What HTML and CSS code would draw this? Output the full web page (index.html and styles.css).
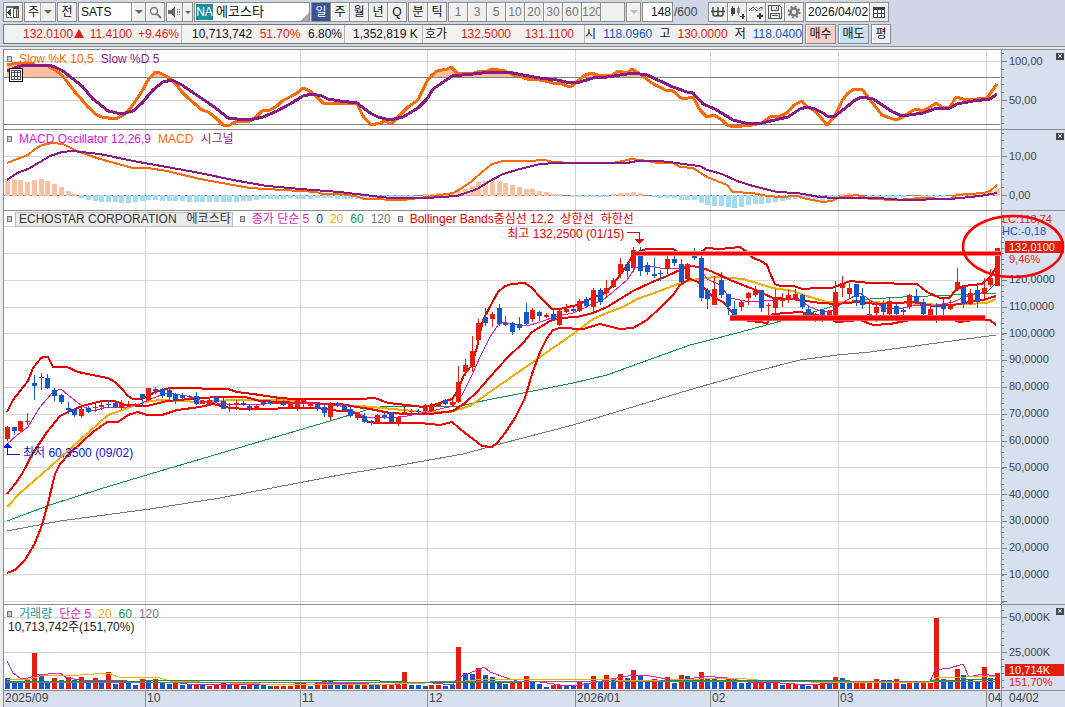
FILE: index.html
```html
<!DOCTYPE html>
<html lang="ko">
  <head>
    <meta charset="UTF-8" />
    <meta name="viewport" content="width=device-width, initial-scale=1.0" />
    <title>SATS 에코스타</title>
    <link rel="stylesheet" href="styles.css">
  </head>
  <body>
    <header class="header">
      <div class="toolbar">
        <button class="btn" aria-label="패널">
          <svg width="14" height="14" viewBox="0 0 14 14" shape-rendering="crispEdges">
            <path d="M1 2h12v11h-12z" fill="#fff" />
            <path d="M0 1h13v2h-13zM0 3h1v10h-1zM0 12h6v1h-6z" fill="#666" />
            <path d="M7 1h6v12h-6z" fill="#555" />
            <path d="M8 4h2v8h-2z" fill="#fff" />
            <path d="M11 4h1v8h-1z" fill="#bbb" />
            <path d="M5 4v7l-4-3.500z" fill="#444" />
          </svg>
        </button>
        <span class="combo">
          <select class="combo-select" aria-label="종목 구분"><option>주</option></select>
        </span>
        <button class="btn">전</button>
        <span class="field">
          <input class="code-input" type="text" value="SATS" aria-label="종목코드" />
          <button class="btn arrow" aria-label="목록"></button>
          <button class="btn" aria-label="검색">
            <svg width="13" height="13" viewBox="0 0 13 13" fill="none" stroke="#777">
              <circle cx="5" cy="5" r="3.500" stroke-width="1.500" />
              <path d="M8 8l4 4" stroke-width="2" />
            </svg>
          </button>
        </span>
        <span class="group">
          <button class="btn btn-narrow" aria-label="소리">
            <svg width="13" height="12" viewBox="0 0 13 12" shape-rendering="crispEdges">
              <path d="M0 4h3l4-4v12l-4-4h-3z" fill="#666" />
              <path d="M9 3h1v1h-1zM11 3h1v1h-1zM9 5h1v2h-1zM11 5h1v2h-1zM9 8h1v1h-1zM11 8h1v1h-1z" fill="#666" />
            </svg>
          </button>
          <button class="btn arrow arrow-small" aria-label="소리 설정"></button>
        </span>
        <div class="name-box"><span class="market">NA</span>에코스타</div>
        <span class="group">
          <button class="btn active">일</button>
          <button class="btn">주</button>
          <button class="btn">월</button>
          <button class="btn">년</button>
          <button class="btn">Q</button>
        </span>
        <span class="group">
          <button class="btn">분</button>
          <button class="btn">틱</button>
        </span>
        <span class="group">
          <button class="btn muted">1</button>
          <button class="btn muted">3</button>
          <button class="btn muted">5</button>
          <button class="btn muted">10</button>
          <button class="btn muted">20</button>
          <button class="btn muted">30</button>
          <button class="btn muted">60</button>
          <button class="btn muted">120</button>
          <input class="minute-input" type="text" aria-label="분 입력" disabled />
          <button class="btn arrow arrow-off" aria-label="분 목록" disabled></button>
        </span>
        <span class="count">
          <input class="count-input" type="text" value="148" aria-label="표시 개수" />/600
        </span>
        <span class="group">
          <button class="btn" aria-label="원화">
            <svg width="14" height="12" viewBox="0 0 14 12" fill="none" stroke="#444" stroke-width="1.500">
              <path d="M2 1v7q0 2 2 2h1q2 0 2-2v-7M7 8q0 2 2 2h1q2 0 2-2v-7M0 5.500h14" />
            </svg>
          </button>
          <button class="btn" aria-label="캔들 추가">
            <svg width="15" height="15" viewBox="0 0 15 15" shape-rendering="crispEdges">
              <path d="M1 3h4v6h-4zM2 1h1v10h-1zM12 9h2v2h1v1h-1v2h-2v-2h-2v-1h2z" fill="#444" />
              <path d="M7 3h3v5h-3zM8 1h1v9h-1z" fill="#888" />
            </svg>
          </button>
          <button class="btn" aria-label="지표 추가">
            <svg width="15" height="15" viewBox="0 0 15 15" fill="none">
              <path d="M0 6l4-4 4 4 4-4 2 2" stroke="#555" />
              <path d="M0 3l3 3 4-4 4 4 3-4" stroke="#999" />
              <path d="M11 8v6M8 11h6" stroke="#444" stroke-width="2" />
            </svg>
          </button>
          <button class="btn" aria-label="저장">
            <svg width="14" height="14" viewBox="0 0 14 14" fill="#555" shape-rendering="crispEdges">
              <path d="M0 0h12v1h-12zM0 0h1v14h-1zM0 13h14v1h-14zM13 2h1v12h-1zM12 1h1v1h-1zM3 1h1v4h-1zM3 5h8v1h-8zM10 1h1v4h-1zM8 2h1v2h-1zM2 8h1v5h-1zM2 8h10v1h-10zM11 8h1v5h-1zM4 10h6v1h-6z" />
            </svg>
          </button>
          <button class="btn" aria-label="설정">
            <svg width="14" height="14" viewBox="0 0 14 14" fill="none" stroke="#777">
              <circle cx="7" cy="7" r="3.500" stroke-width="2.500" />
              <circle cx="7" cy="7" r="5.500" stroke-width="2" stroke-dasharray="2 2.320" />
            </svg>
          </button>
        </span>
        <span class="field">
          <input class="date-input" type="text" value="2026/04/02" aria-label="날짜" />
          <button class="btn" aria-label="달력">
            <svg width="12" height="11" viewBox="0 0 12 11" shape-rendering="crispEdges">
              <path d="M0 0h12v11h-12z" fill="#444" />
              <path d="M1 3h3v3h-3zM5 3h3v3h-3zM9 3h2v3h-2zM1 7h3v3h-3zM5 7h3v3h-3zM9 7h2v3h-2z" fill="#fff" />
            </svg>
          </button>
        </span>
      </div>

      <div class="quote-row">
        <div class="quotes">
          <div class="quote quote-price">
            <span class="up">132.0100<i class="up-mark"></i></span>
            <span class="up">11.4100</span>
            <span class="up">+9.46%</span>
          </div>
          <div class="quote quote-volume">
            <span>10,713,742</span>
            <span class="up">51.70%</span>
            <span>6.80%</span>
          </div>
          <div class="quote quote-amount"><span>1,352,819 K</span></div>
          <div class="quote quote-bid">
            <span>호가</span>
            <span class="up">132.5000</span>
            <span class="up">131.1100</span>
          </div>
          <div class="quote quote-range">
            <span>시</span>
            <span class="down">118.0960</span>
            <span>고</span>
            <span class="up">130.0000</span>
            <span>저</span>
            <span class="down">118.0400</span>
          </div>
        </div>
        <button class="btn order buy">매수</button>
        <button class="btn order sell">매도</button>
        <button class="btn">평</button>
      </div>
    </header>

    <main class="chart">
      <section class="panel panel-stoch">
        <div class="plot">
          <svg class="canvas" id="stoch" viewBox="4 50 997 79" preserveAspectRatio="none"></svg>
          <div class="legend">
            <i class="handle"></i>
            <span class="orange">Slow %K 10,5</span>
            <span class="purple">Slow %D 5</span>
          </div>
          <button class="grid-btn" aria-label="데이터 표">
            <svg width="10" height="10" viewBox="0 0 10 10" shape-rendering="crispEdges">
              <path d="M0 0h10v10h-10z" fill="#555" />
              <path d="M1 1h2v1h-2zM4 1h2v1h-2zM7 1h2v1h-2zM1 3h2v3h-2zM4 3h2v3h-2zM7 3h2v3h-2zM1 7h2v2h-2zM4 7h2v2h-2zM7 7h2v2h-2z" fill="#fff" />
            </svg>
          </button>
        </div>
        <div class="axis">
          <svg class="canvas" id="stochAxis" viewBox="1002 50 63 79" preserveAspectRatio="none"></svg>
          <button class="close" aria-label="닫기">×</button>
          <div class="scale scale-stoch"><span>100,00</span><span>50,00</span></div>
        </div>
      </section>

      <section class="panel panel-macd">
        <div class="plot">
          <svg class="canvas" id="macd" viewBox="4 130 997 80" preserveAspectRatio="none"></svg>
          <div class="legend">
            <i class="handle"></i>
            <span class="violet">MACD Oscillator 12,26,9</span>
            <span class="orange">MACD</span>
            <span class="purple">시그널</span>
          </div>
        </div>
        <div class="axis">
          <svg class="canvas" id="macdAxis" viewBox="1002 130 63 80" preserveAspectRatio="none"></svg>
          <button class="close" aria-label="닫기">×</button>
          <div class="scale scale-macd"><span>10,00</span><span>0,00</span></div>
        </div>
      </section>

      <section class="panel panel-price">
        <div class="plot">
          <svg class="canvas" id="price" viewBox="4 211 997 393" preserveAspectRatio="none"></svg>
          <div class="legend legend-price">
            <i class="handle"></i>
            <span class="company">ECHOSTAR CORPORATION &nbsp;&nbsp;에코스타</span>
            <i class="handle"></i>
            <span class="magenta">종가 단순 5</span>
            <span class="navy">0</span>
            <span class="yellow">20</span>
            <span class="green">60</span>
            <span class="gray">120</span>
            <i class="handle"></i>
            <span class="red">Bollinger Bands중심선 12,2</span>
            <span class="red">상한선</span>
            <span class="red">하한선</span>
          </div>
          <span class="note note-high">최고 132,2500 (01/15)</span>
          <span class="note note-low">최저 60,3500 (09/02)</span>
        </div>
        <div class="axis">
          <svg class="canvas" id="priceAxis" viewBox="1002 211 63 393" preserveAspectRatio="none"></svg>
          <div class="axis-info">
            <span class="up">LC:118,74</span>
            <span class="down">HC:-0,18</span>
            <span class="tag">132,0100</span>
            <span class="up rate">9,46%</span>
          </div>
          <div class="scale scale-price">
            <span>120,0000</span><span>110,0000</span><span>100,0000</span><span>90,0000</span>
            <span>80,0000</span><span>70,0000</span><span>60,0000</span><span>50,0000</span>
            <span>40,0000</span><span>30,0000</span><span>20,0000</span><span>10,0000</span>
          </div>
        </div>
        <svg class="canvas marks" viewBox="4 211 1061 393" preserveAspectRatio="none">
          <path d="M635 253.500H1001" stroke="#ff8080" stroke-width="5" />
          <path d="M635 253.500H1001" stroke="#f00" stroke-width="3" />
          <path d="M730 318H985" stroke="#ff5050" stroke-width="6" />
          <path d="M730 318H985" stroke="#f00" stroke-width="4" />
          <ellipse cx="1013" cy="246.500" rx="50" ry="30.500" fill="none" stroke="#f00" stroke-width="2.500" />
        </svg>
      </section>

      <section class="panel panel-volume">
        <div class="plot">
          <svg class="canvas" id="volume" viewBox="4 605 997 85" preserveAspectRatio="none"></svg>
          <div class="legend">
            <i class="handle"></i>
            <span class="teal">거래량</span>
            <span class="magenta">단순 5</span>
            <span class="yellow">20</span>
            <span class="green">60</span>
            <span class="gray">120</span>
          </div>
          <div class="volume-now">10,713,742주(151,70%)</div>
        </div>
        <div class="axis">
          <svg class="canvas" id="volumeAxis" viewBox="1002 605 63 85" preserveAspectRatio="none"></svg>
          <button class="close" aria-label="닫기">×</button>
          <div class="scale scale-volume"><span>50,000K</span><span>25,000K</span></div>
          <div class="axis-info axis-info-volume">
            <span class="tag">10,714K</span>
            <span class="up rate">151,70%</span>
          </div>
        </div>
      </section>

      <footer class="dates">
        <div class="months">
          <span>2025/09</span><span>10</span><span>11</span><span>12</span>
          <span>2026/01</span><span>02</span><span>03</span><span>04</span>
        </div>
        <div class="today">04/02</div>
      </footer>
    </main>

    <script src="chart.js"></script>
  </body>
</html>
```
FILE: styles.css
```css
* {
  box-sizing: border-box;
}

body {
  margin: 0;
  min-height: 100vh;
  display: flex;
  flex-direction: column;
  background-color: #ebebeb;
  color: #111;
  font-family: "Liberation Sans", "Noto Sans CJK KR", sans-serif;
  font-size: 12px;
  overflow-x: hidden;
}

button,
input,
select {
  font-family: inherit;
  font-size: inherit;
  color: inherit;
  margin: 0;
  padding: 0;
  border-radius: 0;
}

/* Header */
.header {
  height: 46px;
  flex: none;
  padding: 2px 3px 0;
  background-color: #cfd6e6;
}

.toolbar {
  display: flex;
  gap: 1px;
  height: 20px;
  white-space: nowrap;
}

.group,
.field,
.count {
  display: flex;
  flex: none;
}

.btn {
  width: 20px;
  height: 20px;
  flex: none;
  display: flex;
  align-items: center;
  justify-content: safe center;
  border: 1px solid #8c8c8c;
  background-color: #f0f0f0;
  box-shadow: inset 1px 1px #fff;
  overflow: hidden;
  line-height: 16px;
}

.group .btn + .btn {
  margin-left: -1px;
}

.btn-narrow {
  width: 17px;
}

.active {
  background-color: #3a5391;
  box-shadow: none;
  color: #fff;
}

.muted {
  color: #777;
}

.combo {
  position: relative;
  width: 32px;
  flex: none;
}

.combo-select {
  appearance: none;
  width: 100%;
  height: 20px;
  padding-left: 3px;
  border: 1px solid #8c8c8c;
  background-color: #fff;
}

.combo::after {
  content: "";
  position: absolute;
  right: 1px;
  top: 1px;
  width: 14px;
  height: 18px;
  border-left: 1px solid #aaa;
  background-color: #f0f0f0;
  pointer-events: none;
}

.combo::before,
.arrow::after {
  content: "";
  border: 4px solid transparent;
  border-top-color: #666;
  border-bottom: 0;
}

.combo::before {
  position: absolute;
  right: 4px;
  top: 8px;
  z-index: 1;
  pointer-events: none;
}

.field input,
.count input,
.minute-input {
  height: 20px;
  border: 1px solid #8c8c8c;
  background-color: #fff;
}

.field .btn {
  margin-left: -1px;
}

.code-input {
  width: 54px;
  padding-left: 2px;
}

.arrow {
  width: 15px;
}

.arrow-small {
  width: 11px;
}

.arrow-small::after {
  border-width: 3px 3px 0;
}

.arrow-off::after {
  border-top-color: #bbb;
}

.name-box {
  width: 116px;
  height: 20px;
  flex: none;
  border: 1px solid #8c8c8c;
  background: linear-gradient(135deg, transparent 50%, #aaa 50%) right bottom / 8px 8px no-repeat #fff;
  font-size: 13px;
  line-height: 17px;
}

.market {
  display: inline-block;
  margin: 1px 3px 0 1px;
  width: 17px;
  height: 16px;
  line-height: 16px;
  font-size: 12px;
  text-align: center;
  vertical-align: top;
  background-color: #1d8f9e;
  color: #fff;
}

.toolbar .minute-input {
  width: 25px;
  margin-left: -1px;
  background-color: #f0f0f0;
}

.minute-input + .arrow {
  margin-left: 1px;
}

.count {
  width: 65px;
  align-items: center;
  color: #444;
}

.count-input {
  width: 31px;
  margin-right: 1px;
  padding-right: 1px;
  text-align: right;
  color: #111;
}

.date-input {
  width: 65px;
  padding-left: 2px;
}

/* Quotes */
.quote-row {
  display: flex;
  gap: 2px;
  margin-top: 2px;
}

.quotes {
  display: flex;
  width: 800px;
  height: 20px;
  border: 1px solid #777;
  background-color: #f2f2f2;
  line-height: 18px;
  white-space: nowrap;
  overflow: hidden;
}

.quote {
  display: flex;
  flex: none;
  justify-content: space-between;
  padding: 0 2px;
  border-left: 1px solid #b4b4b4;
}

.quote-price {
  width: 177px;
  padding-left: 19px;
  border-left: 0;
}

.quote-volume {
  width: 163px;
  padding-left: 10px;
}

.quote-amount {
  width: 78px;
  padding-left: 8px;
}

.quote-bid {
  width: 162px;
  padding-right: 10px;
}

.quote-range {
  width: 220px;
  padding-left: 0;
}

.up {
  color: #e81c0c;
}

.down {
  color: #1454c8;
}

.up-mark {
  display: inline-block;
  margin-left: 1px;
  border: 5px solid transparent;
  border-top: 0;
  border-bottom: 9px solid #e81c0c;
}

.order {
  width: 31px;
}

.buy {
  background-color: #f4d0ca;
}

.sell {
  background-color: #c8e0f4;
}

/* Chart */
.chart {
  flex: 1;
  display: flex;
  flex-direction: column;
  padding: 2px 0 0 3px;
  border-top: 1px solid #8c8c8c;
}

.panel {
  position: relative;
  display: flex;
  flex: none;
  border-top: 1px solid #8c8c8c;
  border-left: 1px solid #8c8c8c;
}

.panel-stoch {
  height: 80px;
}

.panel-macd {
  height: 81px;
}

.panel-price {
  flex: 1;
  min-height: 394px;
}

.panel-volume {
  height: 86px;
}

.plot {
  position: relative;
  flex: 1;
  min-width: 0;
  background-color: #fff;
  overflow: hidden;
}

.axis {
  position: relative;
  width: 64px;
  flex: none;
  display: flex;
  flex-direction: column;
  border-left: 1px solid #8c8c8c;
  background-color: #d6e0ee;
  color: #444;
  font-size: 11px;
}

.canvas {
  position: absolute;
  left: 0;
  top: 0;
  width: 100%;
  height: 100%;
  shape-rendering: crispEdges;
}

.marks {
  z-index: 2;
  pointer-events: none;
  shape-rendering: auto;
}

.legend {
  position: absolute;
  left: 3px;
  top: 1px;
  display: flex;
  align-items: center;
  gap: 7px;
  line-height: 16px;
  white-space: nowrap;
}

.legend-price {
  top: 0;
}

.handle {
  width: 5px;
  height: 6px;
  border: 1px solid #777;
  background-color: #ccc;
}

.company {
  padding: 0 1px 0 3px;
  margin-left: -4px;
  border: 1px solid #bbb;
  background-color: #ebebeb;
  line-height: 13px;
  color: #333;
}

.orange { color: #ff6a00; }
.purple { color: #8c1a84; }
.violet { color: #d414e0; }
.magenta { color: #d81eb4; }
.navy { color: #0a28a8; }
.yellow { color: #f0ac00; }
.green { color: #0f963c; }
.gray { color: #777; }
.red { color: #e80000; }
.teal { color: #2e9296; }

.grid-btn {
  position: absolute;
  left: 5px;
  top: 18px;
  width: 14px;
  height: 14px;
  display: flex;
  align-items: center;
  justify-content: center;
  border: 1px solid #000;
  background-color: #eee;
}

.note {
  position: absolute;
  line-height: 16px;
  white-space: nowrap;
}

.note-high {
  right: 37.8%;
  top: 15px;
  color: #e80000;
}

.note-low {
  left: 19px;
  top: 59.500%;
  color: #0a14d8;
}

.volume-now {
  position: absolute;
  left: 4px;
  top: 14px;
  line-height: 16px;
  color: #222;
}

.close {
  position: absolute;
  right: 1px;
  top: 3px;
  width: 8px;
  height: 7px;
  border: 0;
  background-color: #444;
  color: #fff;
  font-size: 9px;
  line-height: 7px;
}

/* Axis labels */
.scale {
  position: relative;
  display: flex;
  flex-direction: column;
  justify-content: space-between;
  padding-left: 7px;
  line-height: 14px;
}

.scale-stoch {
  height: 53px;
  margin-top: 4px;
}

.scale-macd {
  height: 53px;
  margin-top: 19px;
}

.scale-volume {
  height: 49px;
  margin-top: 5px;
}

.scale-price {
  flex: 1;
  margin-bottom: 23px;
}

.axis-info {
  position: relative;
  height: 61px;
  display: flex;
  flex-direction: column;
  line-height: 12px;
  padding-top: 2px;
}

.axis-info-volume {
  height: auto;
  padding-top: 5px;
}

.tag {
  margin: 4px 1px 0 3px;
  padding-left: 4px;
  background-color: #e81c0c;
  color: #fff;
}

.axis-info-volume .tag {
  margin-top: 0;
}

.rate {
  padding-left: 7px;
}

/* Dates */
.dates {
  display: flex;
  height: 17px;
  flex: none;
  border-top: 1px solid #8c8c8c;
  background-color: #d6e0ee;
  color: #444;
  line-height: 15px;
}

.months {
  flex: 1;
  display: grid;
  grid-template-columns: 142fr 155fr 127fr 148fr 135fr 128fr 148fr 15fr;
}

.months span {
  min-width: 0;
  padding-left: 1px;
  border-left: 1px solid #8c8c8c;
}

.today {
  width: 64px;
  padding-left: 7px;
  border-left: 1px solid #8c8c8c;
}
```
FILE: chart.js
```js
const NS = "http://www.w3.org/2000/svg";
const RED = "#e81c0c";
const BLUE = "#1459cc";
const GRID = "#d6d6d6";
const DARK = "#808080";
const STEP = 6.735;

const months = [145, 300, 427, 575, 710, 838, 986];

// body top, body bottom, wick top, wick bottom
const candles = `r427,439,426,441 b427,431,427,435 r421,431,421,433 r421,422,413,425 b383,386,375,400
b377,378,373,390 b378,388,374,389 b390,396,388,401 b395,402,394,404 b408,410,402,414
b409,415,408,417 r409,416,405,418 b408,412,406,413 r407,408,404,412 r405,407,401,410
b404,405,400,408 b403,407,402,408 r404,408,400,410 r404,405,401,407 r404,405,403,407
b394,398,394,405 r388,400,388,401 b389,391,387,394 b389,396,388,398 b390,397,388,400
b394,401,393,404 b395,398,393,399 b396,397,395,399 b396,404,392,405 r401,404,400,404
r400,405,397,405 b397,402,397,402 b401,409,397,409 r404,405,403,412 r403,405,400,410
b403,405,401,406 b406,409,404,411 r406,409,405,409 b402,404,401,406 b402,403,400,405
r401,404,397,404 b402,405,400,406 r404,407,403,408 r400,407,400,411 r400,402,398,407
r404,406,403,407 b404,409,403,411 b407,413,405,417 r404,417,402,420 b403,405,402,407
b405,410,405,410 b409,416,407,417 r414,418,413,420 b416,422,413,423 b421,423,420,425
r415,423,414,424 b415,417,413,419 b412,422,412,424 r417,422,416,426 r412,413,406,415
r411,412,409,414 b411,412,409,414 r405,411,404,413 r405,411,403,412 r403,406,402,407
b400,404,399,405 r402,405,400,407 r382,402,366,403 r365,372,359,376 r351,367,336,372
r323,340,319,344 b317,323,308,326 r314,319,312,327 b308,324,304,326 b323,325,316,326
b323,332,322,335 b324,328,317,330 b312,324,303,325 r310,319,308,322 b312,316,311,321
r315,317,313,318 b314,320,308,321 r311,325,310,326 r309,312,304,313 b309,311,305,312
r301,311,299,312 b299,306,297,308 r290,307,288,312 b290,302,288,305 r288,293,280,298
r280,287,278,288 r264,274,258,278 b264,271,262,277 r250,268,247,272 b252,271,247,276
b265,272,262,275 b274,276,258,278 b273,274,270,281 r259,269,256,274 b259,263,256,266
b264,282,259,285 r264,279,263,281 b255,258,248,260 b258,298,255,301 b290,299,288,309
r289,305,276,305 b280,295,272,298 b294,306,294,315 b309,316,301,317 r302,307,300,311
r293,298,292,305 r291,295,286,297 b290,308,290,312 r305,306,303,315 r298,308,289,314
r299,301,293,307 r295,300,290,303 r294,300,289,301 b295,307,294,309 b309,316,306,317
b315,316,313,322 b310,316,309,322 r311,315,310,317 r292,315,281,316 r283,288,276,297
r288,294,283,298 b284,297,284,306 b296,305,288,309 b314,316,300,317 r307,313,302,322
b304,312,300,316 r301,314,297,315 b306,314,304,316 b310,312,308,317 r295,307,294,309
b296,302,289,303 b302,314,299,315 r309,316,306,317 b306,307,303,323 b304,309,299,317
r304,309,300,310 r282,289,268,291 b287,304,286,308 r293,304,289,305 b290,302,285,308
r288,294,278,299 r278,285,269,287 r248,286,248,286`.split(/\s+/);

// bar heights with the day's direction
const volumes = `b11 b8 b6 r10 r36 b14 b6 r11 b9 r12 b9 r12 b6 r11 b6 r17 b5 r6 b6 b4 r10 b8 r10 b6 b5
r6 b4 b4 r4 b4 r3 r4 r6 b4 r5 b3 r5 b4 b4 b3 r3 r3 r3 r6 r6 b3 r6 r8 b8 b4 b4
r4 b4 r6 b4 b4 r4 r4 r4 r17 b4 b4 b3 r4 r4 b3 b4 r42 b16 b15 r21 b14 b12 b6 b5 r7 r7 r13 b7 b5
b2 r4 r4 b3 b3 r7 b6 r13 b7 r14 b11 r15 b11 r19 b14 b8 r10 b8 r12 b6 r14 b13 b8 r17 b10
b10 b9 r10 b7 b6 b6 r6 r9 b6 r6 b4 r5 r5 b4 b3 r5 r6 b5 r12 b11 b7 r7 r6 r6 r10 b9 b9 r10
b5 r6 b6 r6 r6 r71 b10 b7 r20 b14 b10 b7 r22 b11 r16`.split(/\s+/);

const oscillator = [
  16, 15, 15, 13, 15, 16, 14, 11, 8, 4, 1, -2, -4, -5, -6, -6, -6, -7, -7, -6, -5, -4, -4, -5, -5,
  -5, -5, -6, -6, -6, -6, -6, -6, -6, -6, -5, -5, -4, -3, -3, -3, -3, -2, -3, -3, -3, -2, -2, -2, -3,
  -3, -3, -3, -4, -4, -2, -2, -2, -2, -1, -1, 0, 1, 1, 2, 2, 2, 4, 6, 9, 13, 14, 14, 14, 12,
  10, 8, 6, 6, 4, 3, 1, 1, 0, -1, -1, -1, -1, -1, -1, 1, 2, 2, 3, 2, 0, -1, -2, -2, -2,
  -4, -4, -4, -7, -9, -10, -10, -11, -12, -11, -9, -8, -8, -7, -6, -5, -4, -3, -3, -4, -5, -5, -4, -2, 1,
  2, 1, 0, -1, -2, -3, -3, -3, -3, 0, 0, -1, -1, -1, -1, 0, 2, 2, 2, 1, 2, 4, 7,
];

const slowK = "7,65 12,64 20,63 32,63 35,65 48,66 55,70 62,75 68,83 75,92 82,100 88,107 97,115 102,117 115,119 122,116 128,111 135,102 142,91 148,80 155,72 160,73 168,77 175,83 182,92 188,98 195,104 202,110 208,112 215,117 223,125 230,125 237,121 250,121 257,116 262,111 270,110 277,106 282,101 290,97 297,93 303,88 310,91 317,97 323,103 340,103 357,104 363,116 371,125 380,123 385,121 391,124 398,117 408,107 418,100 427,81 432,75 437,71 447,69 451,67 457,73 472,74 480,71 485,72 492,69 505,71 513,75 520,76 527,79 533,79 545,81 553,83 560,83 567,86 572,86 578,81 585,75 592,73 600,76 612,75 618,71 627,73 632,69 640,74 652,83 665,90 673,91 681,98 688,98 693,97 700,110 707,117 714,115 722,120 727,125 733,127 742,126 752,125 762,123 770,117 780,116 787,113 794,105 802,101 807,107 815,111 822,119 827,125 835,116 842,101 848,93 854,89 862,89 867,96 875,106 882,115 890,118 896,120 903,117 910,112 916,109 923,111 930,107 936,103 942,107 950,107 956,97 963,99 977,99 987,98 992,91 997,84";
const slowD = "7,71 17,67 25,65 48,65 55,67 63,71 73,79 82,86 93,99 102,106 108,111 122,114 133,111 142,103 153,90 163,82 172,80 182,85 195,94 207,102 217,109 228,118 237,119 250,120 263,117 277,111 290,104 303,96 312,94 322,96 328,99 340,101 357,103 365,109 370,113 378,117 390,120 403,117 418,108 427,99 433,89 442,83 452,76 473,74 492,72 507,72 523,75 540,78 557,80 570,83 580,82 593,78 607,77 627,74 633,73 647,75 660,81 673,87 687,92 693,93 703,104 715,109 733,120 745,123 762,123 788,117 800,109 807,107 815,109 823,113 827,116 835,116 843,110 855,100 862,97 873,99 893,112 902,116 923,113 937,108 950,108 957,104 973,101 990,99 997,94";
const macdLine = "7,163 17,159 28,155 35,149 42,145 52,143 63,144 75,150 88,155 100,159 133,168 148,168 167,171 200,179 233,185 250,188 300,191 317,192 322,194 340,194 355,196 365,199 403,200 427,197 453,193 462,188 472,181 482,172 492,164 503,161 528,161 545,160 553,162 573,163 613,163 632,159 648,161 657,163 673,163 680,167 693,168 707,177 727,185 733,192 753,193 767,196 780,197 797,196 807,199 823,202 832,201 840,197 857,195 870,199 897,200 920,198 950,199 957,195 983,193 990,191 997,185";
const signalLine = "7,180 17,173 28,169 40,162 50,156 62,152 72,151 100,154 133,161 167,167 200,173 233,180 267,186 300,189 340,192 373,196 390,198 427,198 457,196 477,189 490,181 503,174 520,169 540,164 557,163 627,163 637,161 660,161 677,163 690,165 700,166 707,170 722,174 737,181 753,186 777,192 797,193 820,197 833,198 877,198 903,200 950,199 980,196 997,193";

const upper = "7,412 13,400 20,391 28,381 33,368 41,358 44,357 48,357 53,367 67,367 78,372 97,376 108,378 115,382 122,389 128,396 133,399 142,399 148,396 155,392 170,388 193,388 210,389 228,389 237,392 253,394 280,398 293,399 360,399 375,398 388,403 407,405 423,407 437,404 452,399 457,392 464,375 472,365 477,347 483,320 492,303 498,292 505,286 512,284 525,283 532,288 540,297 552,309 560,309 577,305 590,299 607,292 617,279 627,265 633,255 640,251 647,249 673,249 678,252 692,255 700,253 706,248 720,249 740,247 747,252 753,258 761,261 767,265 770,273 775,284 780,286 793,286 803,289 817,288 832,288 840,285 850,281 870,283 917,284 927,292 940,298 949,298 955,291 963,286 982,284 990,277 996,268";
const middle = "7,494 15,484 22,474 33,453 47,432 60,416 68,412 82,406 102,401 115,401 125,405 147,406 167,401 190,399 217,397 245,397 260,401 300,403 340,404 357,407 370,409 390,413 407,414 430,414 453,411 465,403 477,392 490,377 507,358 523,343 532,332 550,321 560,318 577,317 593,313 607,307 620,299 633,291 650,283 667,276 682,269 690,266 700,267 713,272 730,280 753,289 773,298 793,299 820,303 837,304 857,302 877,304 913,302 933,306 953,305 970,302 983,300 996,296";
const lower = "7,573 15,570 25,560 35,543 42,525 48,503 55,474 60,464 70,453 82,442 93,432 107,422 118,422 128,415 138,412 147,415 162,415 177,410 200,407 213,404 230,408 247,409 267,409 290,408 317,408 340,411 350,411 360,416 368,422 377,423 420,423 440,425 452,422 465,433 473,439 482,446 492,447 498,442 505,433 515,418 525,398 532,374 540,352 547,338 553,330 560,328 583,329 600,324 620,329 633,328 647,320 660,308 673,295 680,285 690,279 698,282 713,297 723,302 732,312 743,320 767,323 773,314 800,312 817,315 837,322 860,320 873,325 890,324 910,320 947,318 960,322 980,319 990,320 996,325";
const ma5 = "7,444 17,435 28,427 40,407 53,392 61,389 68,395 82,406 93,411 107,407 127,407 140,404 153,398 167,393 187,396 207,402 227,404 247,405 283,403 317,404 340,406 367,417 390,418 407,416 427,412 453,406 462,395 472,375 480,357 490,337 500,322 527,326 540,322 557,316 573,313 590,305 603,300 613,292 627,280 635,268 647,266 667,269 679,268 693,265 700,268 707,279 720,285 730,298 750,302 773,300 797,298 810,307 823,312 833,310 847,300 860,293 873,302 887,309 903,308 917,305 937,305 953,302 970,295 987,292 996,283";
const ma20 = "7,507 20,493 42,474 60,458 80,440 108,415 125,409 145,402 160,400 200,402 233,400 283,400 300,402 340,405 360,406 383,408 423,412 450,412 470,406 480,399 497,387 523,369 533,362 550,350 573,334 593,319 607,313 623,307 637,299 657,292 683,282 703,278 720,277 743,279 753,282 773,288 793,291 810,297 827,302 857,302 903,303 943,305 987,303 996,299";
const ma60 = "7,521 50,505 100,489 150,474 340,418 373,408 387,406 460,406 487,400 523,393 573,383 607,375 640,363 690,345 710,340 737,333 770,324 800,316 827,308 843,302 870,299 903,297 953,295 996,293";
const ma120 = "7,531 60,521 150,509 220,498 345,474 407,464 463,454 500,444 573,425 679,393 710,384 753,372 800,360 837,355 870,352 937,343 996,335";

const vol5 = "7,661 13,673 20,678 28,678 37,675 60,673 67,678 80,680 127,681 143,683 153,682 173,682 187,684 233,684 293,685 340,683 397,685 407,682 433,683 453,685 457,678 470,673 484,667 490,672 507,678 517,681 540,682 567,686 587,684 617,678 633,675 650,676 667,679 690,679 703,676 727,678 747,682 780,683 810,685 833,683 863,682 903,681 930,682 935,670 950,668 963,664 969,677 982,674 996,676";
const vol20 = "7,680 30,679 40,676 80,675 108,673 118,677 160,678 170,681 260,684 395,684 455,682 475,680 490,679 590,679 640,681 700,679 735,678 770,681 850,683 930,682 936,678 996,676";
const vol60 = "7,682 50,681 145,681 265,680 300,680 380,681 430,683 520,682 620,682 700,680 850,681 930,681 996,679";
const vol120 = "7,683 200,682 430,682 700,681 996,681";

function add(svg, name, attrs) {
  const el = document.createElementNS(NS, name);
  for (const key in attrs) el.setAttribute(key, attrs[key]);
  svg.appendChild(el);
  return el;
}

function barX(i) {
  return Math.round(7 + i * STEP);
}

function rect(svg, x, y, width, height, fill) {
  add(svg, "rect", { x, y, width, height, fill });
}

function line(svg, points, stroke, width) {
  add(svg, "polyline", { points, fill: "none", stroke, "stroke-width": width, "stroke-linejoin": "round" });
}

function grid(svg, rows, top, bottom) {
  rows.forEach((y) => rect(svg, 4, y, 996, 1, GRID));
  months.forEach((x) => rect(svg, x, top, 1, bottom - top, GRID));
}

function ticks(id, from, to, major, minor) {
  const svg = document.getElementById(id);
  major.forEach((y) => rect(svg, 1002, y, 5, 1, DARK));
  for (let y = major[0]; y < to; y += minor) rect(svg, 1002, Math.round(y), 2, 1, DARK);
  for (let y = major[0]; y > from; y -= minor) rect(svg, 1002, Math.round(y), 2, 1, DARK);
}

function drawStoch() {
  const svg = document.getElementById("stoch");
  grid(svg, [61, 100], 50, 129);
  // shade the part of %K above the 80 line
  const clip = add(svg, "clipPath", { id: "over" });
  rect(clip, 4, 50, 997, 28, "#000");
  add(svg, "polygon", { points: "7,128 " + slowK + " 997,128", fill: "#fac0a0", "clip-path": "url(#over)" });
  rect(svg, 4, 77, 996, 1, DARK);
  rect(svg, 4, 124, 996, 1, DARK);
  line(svg, slowK, "#ff6a00", 3);
  line(svg, slowD, "#8c1a84", 3);
}

function drawMacd() {
  const svg = document.getElementById("macd");
  grid(svg, [156], 130, 210);
  rect(svg, 4, 195, 996, 1, DARK);
  oscillator.forEach((v, i) => {
    if (v > 0) rect(svg, barX(i) - 2, 195 - v, 5, v + 1, "#fac0a0");
    if (v < 0) rect(svg, barX(i) - 2, 195, 5, 1 - v, "#a4dcf4");
  });
  line(svg, macdLine, "#ff6a00", 2);
  line(svg, signalLine, "#8c1a84", 2);
}

function drawPrice() {
  const svg = document.getElementById("price");
  grid(svg, [226, 253, 280, 307, 333, 360, 387, 414, 441, 467, 494, 521, 548, 574, 601], 211, 604);
  line(svg, ma120, "#777", 1);
  line(svg, ma60, "#0f963c", 1);
  line(svg, ma20, "#f0ac00", 2);
  line(svg, upper, "#e60000", 2);
  line(svg, middle, "#f00000", 2);
  line(svg, lower, "#fa0000", 2);
  line(svg, ma5, "#d81eb4", 1);
  candles.forEach((c, i) => {
    const color = c[0] === "r" ? RED : BLUE;
    const [top, bottom, high, low] = c.slice(1).split(",").map(Number);
    rect(svg, barX(i), high, 1, low - high, color);
    rect(svg, barX(i) - 2, top, 5, bottom - top, color);
  });
  // high and low pointers
  line(svg, "627,232.500 639.500,232.500 639.500,240", "#e80000", 1);
  add(svg, "polygon", { points: "635,239 644,239 639.500,244", fill: "#e80000" });
  line(svg, "20,454.500 7.500,454.500 7.500,446", "#0a14d8", 1);
  add(svg, "polygon", { points: "3,448 12,448 7.500,443", fill: "#0a14ff" });
}

function drawVolume() {
  const svg = document.getElementById("volume");
  grid(svg, [617, 652, 688], 605, 690);
  volumes.forEach((v, i) => {
    const h = Number(v.slice(1));
    rect(svg, barX(i) - 2, 689 - h, 5, h, v[0] === "r" ? RED : BLUE);
  });
  line(svg, vol5, "#d81eb4", 1);
  line(svg, vol20, "#f0ac00", 1);
  line(svg, vol60, "#0f963c", 1);
  line(svg, vol120, "#777", 1);
}

drawStoch();
drawMacd();
drawPrice();
drawVolume();
ticks("stochAxis", 50, 128, [61, 100], 7.8);
ticks("macdAxis", 130, 209, [156, 195], 7.8);
ticks("priceAxis", 211, 603, [280, 307, 333, 360, 387, 414, 441, 467, 494, 521, 548, 574, 601], 5.36);
ticks("volumeAxis", 605, 689, [617, 652], 7);
```
